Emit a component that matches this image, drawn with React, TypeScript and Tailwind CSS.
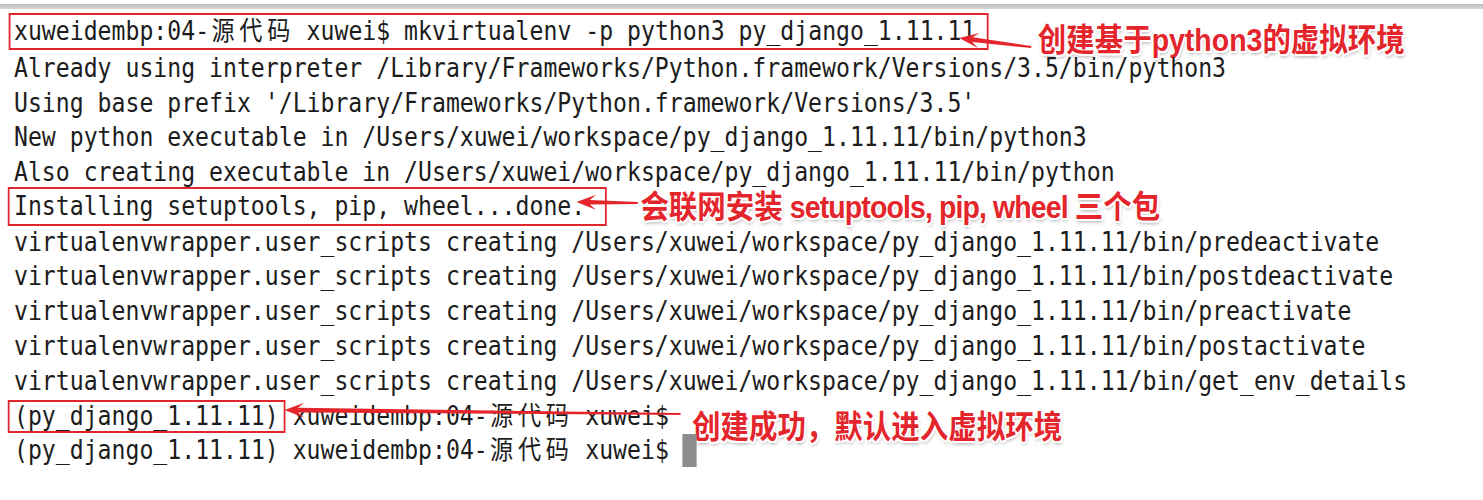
import React from "react";

// CJK glyphs take two terminal cells
function Term({ text }: { text: string }) {
  return (
    <span>
      {Array.from(text).map((ch, i) =>
        /[\u4e00-\u9fff]/.test(ch) ? (
          <span key={i} className="inline-block w-[2ch] text-center">
            {ch}
          </span>
        ) : (
          <React.Fragment key={i}>{ch}</React.Fragment>
        )
      )}
    </span>
  );
}

// tapered red arrow, drawn from the tail (right) to the tip (left)
function Arrow({
  w,
  tailY,
  tipY,
  className,
}: {
  w: number;
  tailY: number;
  tipY: number;
  className: string;
}) {
  const tip: [number, number] = [0, tipY];
  const tail: [number, number] = [w, tailY];
  const dx = tip[0] - tail[0];
  const dy = tip[1] - tail[1];
  const len = Math.hypot(dx, dy);
  const ux = dx / len;
  const uy = dy / len;
  const at = (d: number, s: number) =>
    `${tip[0] - ux * d - uy * s},${tip[1] - uy * d + ux * s}`;
  const pts = [
    at(len, 1),
    at(15, 2.3),
    at(22, 7.5),
    at(0, 0),
    at(22, -7.5),
    at(15, -2.3),
    at(len, -1),
  ].join(" ");
  return (
    <svg
      width={w}
      height={35}
      viewBox={`0 0 ${w} 35`}
      className={`shrink-0 overflow-visible ${className}`}
    >
      <polygon points={pts} fill="#e4262c" />
    </svg>
  );
}

const boxCls = "inline-flex items-center shrink-0 border-2 border-[#e0262c]";

const labelCls =
  "shrink-0 text-[32px] leading-[32px] font-bold text-[#e4262c] font-['Liberation_Sans','Noto_Sans_CJK_SC',sans-serif] [text-shadow:-2px_0_0_#fff,2px_0_0_#fff,0_-2px_0_#fff,0_2px_0_#fff,-1.5px_-1.5px_0_#fff,1.5px_-1.5px_0_#fff,-1.5px_1.5px_0_#fff,1.5px_1.5px_0_#fff,1px_3px_4px_rgba(0,0,0,0.35)]";

const middle: string[] = [
  "Already using interpreter /Library/Frameworks/Python.framework/Versions/3.5/bin/python3",
  "Using base prefix '/Library/Frameworks/Python.framework/Versions/3.5'",
  "New python executable in /Users/xuwei/workspace/py_django_1.11.11/bin/python3",
  "Also creating executable in /Users/xuwei/workspace/py_django_1.11.11/bin/python",
];

const scripts = ["predeactivate", "postdeactivate", "preactivate", "postactivate", "get_env_details"];

export default function App() {
  return (
    <div className="w-[1483px] h-[500px] bg-white overflow-hidden">
      <div className="mt-[4px] h-[5px] bg-gradient-to-b from-[#bdbdbd] to-[#d6d6d6]" />

      <div className="pt-[7px] pl-[14px]">
        <div className="origin-left scale-x-[0.89] whitespace-pre text-[26px] text-[#1c1c1c] font-['DejaVu_Sans_Mono','Noto_Sans_CJK_SC',monospace] [&>div]:h-[34.8px] [&>div]:flex [&>div]:items-center">
          <div>
            <span className={`${boxCls} h-[37px] mb-[4px] -ml-[6px] pl-[4px] pr-[13px] -mr-[15px]`}>
              <Term text="xuweidembp:04-源代码 xuwei$ mkvirtualenv -p python3 py_django_1.11.11" />
            </span>
            <Arrow w={81} tipY={22} tailY={31} className="-ml-[18px]" />
            <span className={`${labelCls} ml-[7px] mt-[13px]`}>创建基于python3的虚拟环境</span>
          </div>

          {middle.map((l) => (
            <div key={l}>{l}</div>
          ))}

          <div>
            <span className={`${boxCls} h-[39px] mb-[2px] -ml-[7px] pl-[5px] pr-[22px] -mr-[24px]`}>
              <span>Installing setuptools, pip, wheel...done.</span>
            </span>
            <Arrow w={69} tipY={12} tailY={13} className="-ml-[10px]" />
            <span className={`${labelCls} ml-[3px]`}>
              会联网安装<span className="tracking-[-1px]"> setuptools, pip, wheel </span>三个包
            </span>
          </div>

          {scripts.map((s) => (
            <div key={s}>
              <span>virtualenvwrapper.user_scripts creating /Users/xuwei/workspace/py_django_1.11.11/bin/{s}</span>
            </div>
          ))}

          <div>
            <span className={`${boxCls} h-[33px] -ml-[7px] pl-[5px] pr-[6px] -mr-[8px]`}>
              <span>(py_django_1.11.11)</span>
            </span>
            <Term text=" xuweidembp:04-源代码 xuwei$" />
            <Arrow w={445} tipY={11} tailY={15} className="-ml-[432px]" />
            <span className={`${labelCls} ml-[13px] mt-[22px]`}>创建成功，默认进入虚拟环境</span>
          </div>

          <div>
            <Term text="(py_django_1.11.11) xuweidembp:04-源代码 xuwei$ " />
            <span className="w-[1ch] h-[33px] bg-[#8c8c8c]" />
          </div>
        </div>
      </div>
    </div>
  );
}
